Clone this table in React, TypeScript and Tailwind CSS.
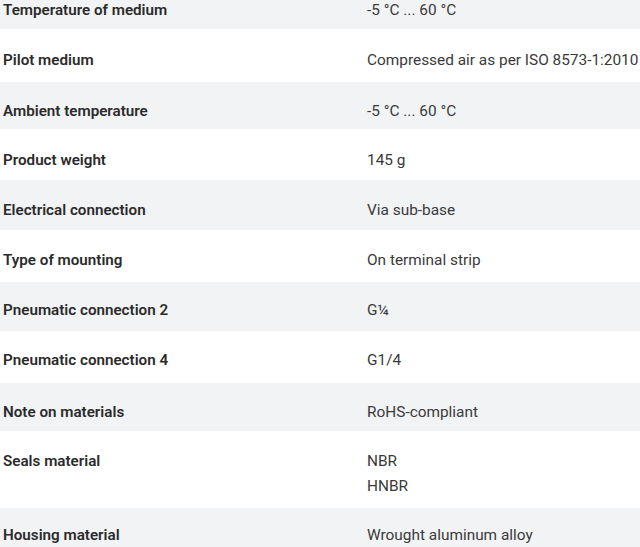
const specs: { label: string; values: string[]; h: string; pt: string }[] = [
  { label: "Temperature of medium", values: ["-5 °C ... 60 °C"], h: "h-[50px]", pt: "pt-[19px]" },
  { label: "Pilot medium", values: ["Compressed air as per ISO 8573-1:2010"], h: "h-[53px]", pt: "pt-[19px]" },
  { label: "Ambient temperature", values: ["-5 °C ... 60 °C"], h: "h-[47px]", pt: "pt-[17px]" },
  { label: "Product weight", values: ["145 g"], h: "h-[51px]", pt: "pt-[19px]" },
  { label: "Electrical connection", values: ["Via sub-base"], h: "h-[50px]", pt: "pt-[18px]" },
  { label: "Type of mounting", values: ["On terminal strip"], h: "h-[52px]", pt: "pt-[18px]" },
  { label: "Pneumatic connection 2", values: ["G¼"], h: "h-[49px]", pt: "pt-[16px]" },
  { label: "Pneumatic connection 4", values: ["G1/4"], h: "h-[52px]", pt: "pt-[17px]" },
  { label: "Note on materials", values: ["RoHS-compliant"], h: "h-[48px]", pt: "pt-[17px]" },
  { label: "Seals material", values: ["NBR", "HNBR"], h: "h-[77px]", pt: "pt-[18px]" },
  { label: "Housing material", values: ["Wrought aluminum alloy"], h: "h-[50px]", pt: "pt-[15px]" },
];

export default function App() {
  return (
    <div
      className="w-[640px] h-[547px] overflow-hidden bg-white"
      style={{ fontFamily: 'Roboto, "Liberation Sans", sans-serif' }}
    >
      <div className="-mt-[21px]">
        {specs.map((row, i) => (
          <div
            key={row.label}
            className={`flex ${row.pt} ${row.h} ${i % 2 === 0 ? "bg-[#f2f3f5]" : "bg-white"}`}
          >
            <div className="w-[367px] shrink-0 pl-[3px] text-[15.2px] leading-6 font-semibold text-[#2b2b2b] whitespace-nowrap">
              {row.label}
            </div>
            <div className="flex flex-col text-[15.4px] leading-[25px] text-[#3a3a3a] whitespace-nowrap">
              {row.values.map((v) => (
                <span key={v}>{v}</span>
              ))}
            </div>
          </div>
        ))}
      </div>
    </div>
  );
}
